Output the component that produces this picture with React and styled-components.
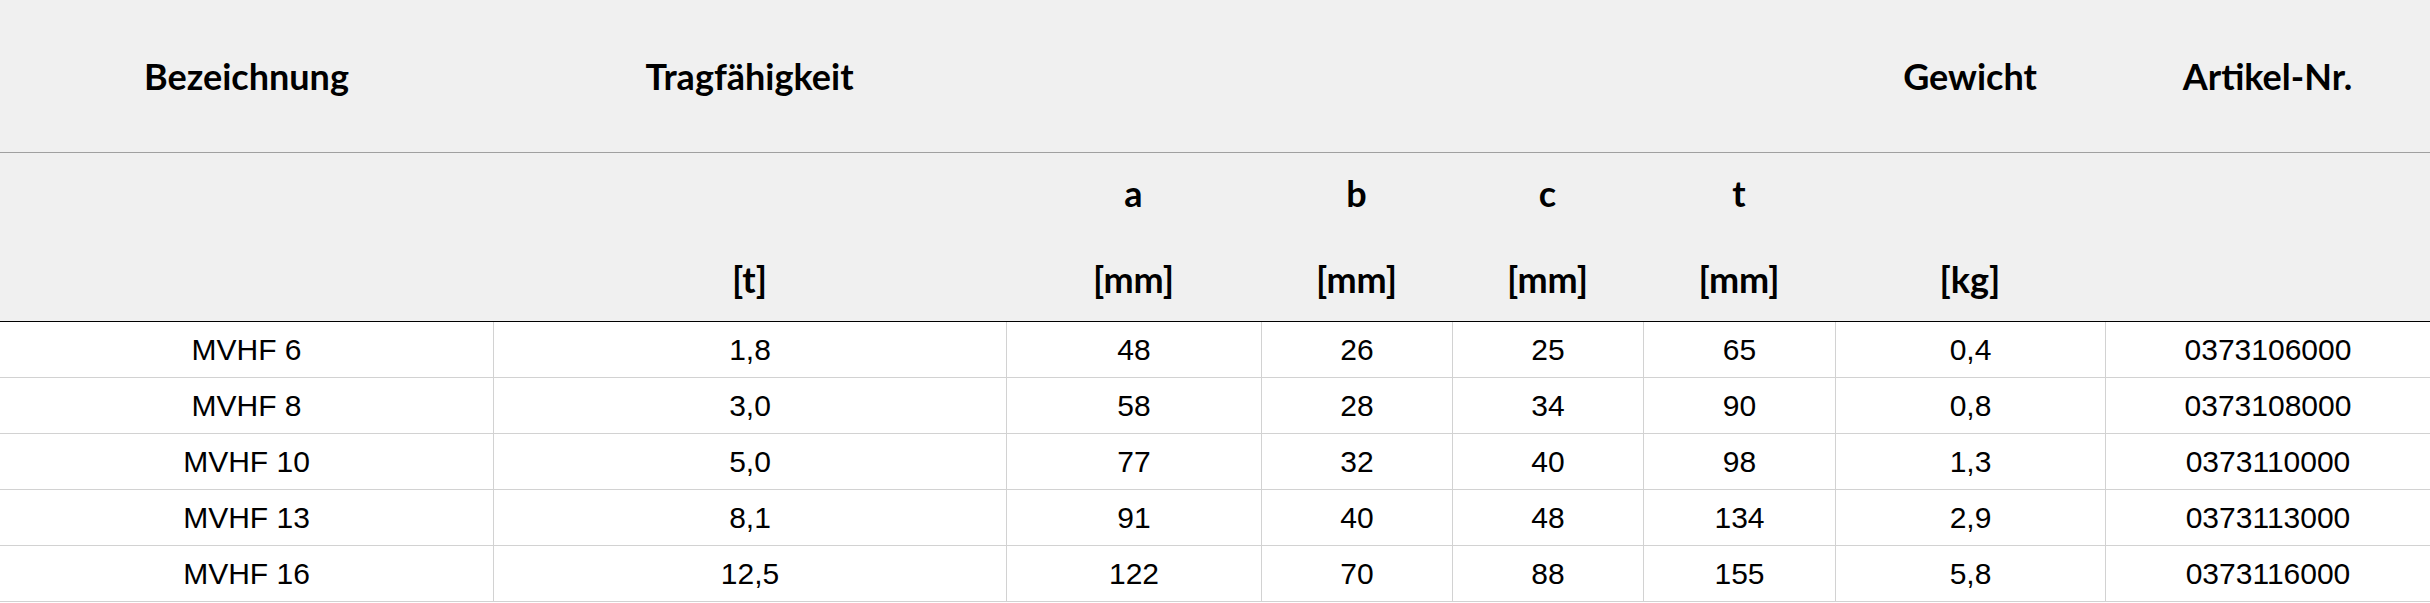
import React from 'react'
import styled, { createGlobalStyle } from 'styled-components'

const GlobalStyle = createGlobalStyle`
  html, body {
    margin: 0;
    padding: 0;
    background: #ffffff;
  }
`

const columns = [493, 513, 255, 191, 191, 192, 270, 325]

const rows = [
  ['MVHF 6', '1,8', '48', '26', '25', '65', '0,4', '0373106000'],
  ['MVHF 8', '3,0', '58', '28', '34', '90', '0,8', '0373108000'],
  ['MVHF 10', '5,0', '77', '32', '40', '98', '1,3', '0373110000'],
  ['MVHF 13', '8,1', '91', '40', '48', '134', '2,9', '0373113000'],
  ['MVHF 16', '12,5', '122', '70', '88', '155', '5,8', '0373116000'],
]

function App() {
  return (
    <>
      <GlobalStyle />
      <Table>
        <colgroup>
          {columns.map((w, i) => (
            <col key={i} style={{ width: w }} />
          ))}
        </colgroup>
        <thead>
          <TitleRow>
            <Head>Bezeichnung</Head>
            <Head>Tragfähigkeit</Head>
            <Head />
            <Head />
            <Head />
            <Head />
            <Head>Gewicht</Head>
            <Head>Artikel-Nr.</Head>
          </TitleRow>
          <LetterRow>
            <Head />
            <Head />
            <Head>a</Head>
            <Head>b</Head>
            <Head>c</Head>
            <Head>t</Head>
            <Head />
            <Head />
          </LetterRow>
          <UnitRow>
            <Head />
            <Head>[t]</Head>
            <Head>[mm]</Head>
            <Head>[mm]</Head>
            <Head>[mm]</Head>
            <Head>[mm]</Head>
            <Head>[kg]</Head>
            <Head />
          </UnitRow>
        </thead>
        <tbody>
          {rows.map((r) => (
            <BodyRow key={r[0]}>
              {r.map((v, i) => (
                <Cell key={i} $first={i === 0}>{v}</Cell>
              ))}
            </BodyRow>
          ))}
        </tbody>
      </Table>
    </>
  )
}

export default App

const Table = styled.table`
  width: 2430px;
  table-layout: fixed;
  border-collapse: separate;
  border-spacing: 0;
`

const Head = styled.th`
  padding: 0;
  background: #f0f0f0;
  color: #000;
  font-family: Lato, "Open Sans", sans-serif;
  font-weight: 700;
  font-size: 36px;
  line-height: 42px;
  text-align: center;
  vertical-align: middle;
  box-sizing: border-box;
`

const TitleRow = styled.tr`
  height: 153px;
  th {
    border-bottom: 1px solid #a0a0a0;
  }
`

const LetterRow = styled.tr`
  height: 84px;
  th {
    padding-bottom: 4px;
  }
`

const UnitRow = styled.tr`
  height: 85px;
  th {
    border-bottom: 1px solid #000;
  }
`

const BodyRow = styled.tr`
  height: 56px;
`

const Cell = styled.td`
  padding: 0;
  box-sizing: border-box;
  font-family: "Liberation Sans", Arial, sans-serif;
  font-size: 30px;
  line-height: 34px;
  color: #000;
  text-align: center;
  vertical-align: middle;
  border-bottom: 1px solid #d2d2d2;
  border-left: ${(p) => (p.$first ? 'none' : '1px solid #d2d2d2')};
`
